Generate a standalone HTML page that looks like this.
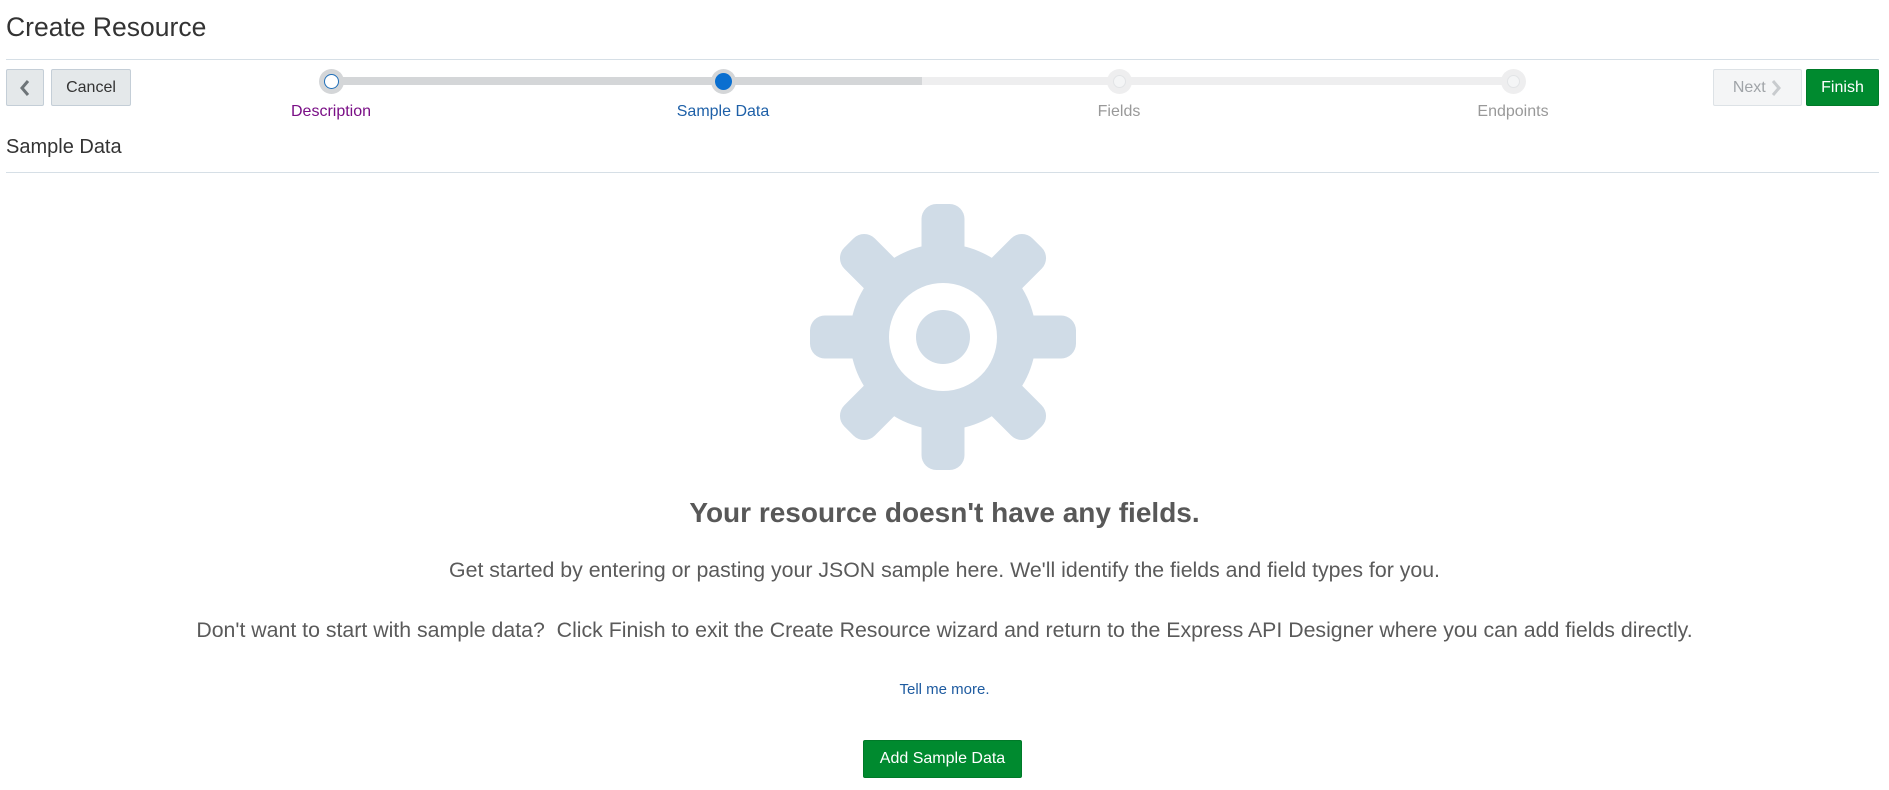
<!DOCTYPE html>
<html><head><meta charset="utf-8"><style>
*{box-sizing:border-box;margin:0;padding:0}
body{width:1889px;height:790px;background:#fff;font-family:"Liberation Sans",sans-serif;position:relative;overflow:hidden;color:#333}
.a{position:absolute}
.hr{position:absolute;left:6px;width:1873px;height:1px;background:#d6dfe6}
.btn{position:absolute;top:69px;height:37px;border:1px solid #c4ced7;border-radius:2px;background:#e4e8ea;font-size:16px;display:flex;align-items:center;justify-content:center;color:#333}
.c{position:absolute;top:69px;width:25px;height:25px;border-radius:50%}
.lbl{position:absolute;top:103px;font-size:16px;transform:translateX(-50%);white-space:nowrap}
.ctr{position:absolute;left:0;width:1889px;text-align:center;color:#5a5a5a;white-space:nowrap}
</style></head><body>
<div class="a" style="left:6px;top:12px;font-size:26.5px;color:#333">Create Resource</div>
<div class="hr" style="top:59px"></div>
<div class="btn" style="left:6px;width:38px"><svg width="14" height="20" viewBox="0 0 14 20"><path d="M10 3 L4 10 L10 17" fill="none" stroke="#6d7478" stroke-width="3"/></svg></div>
<div class="btn" style="left:51px;width:80px">Cancel</div>
<div class="a" style="left:331px;top:77px;width:591px;height:8px;background:#d4d6d8"></div>
<div class="a" style="left:922px;top:77px;width:591px;height:8px;background:#eeeeef"></div>
<div class="c" style="left:319px;background:#d4d6d8"><div class="a" style="left:5px;top:5px;width:15px;height:15px;border-radius:50%;background:#fff;border:1.5px solid #1f6fb9"></div></div>
<div class="c" style="left:711px;background:#d4d6d8"><div class="a" style="left:4px;top:4px;width:17px;height:17px;border-radius:50%;background:#0a6fd0"></div></div>
<div class="c" style="left:1107px;background:#eeeeef"><div class="a" style="left:6px;top:6px;width:13px;height:13px;border-radius:50%;background:#f4f5f6;border:1px solid #e2e4e6"></div></div>
<div class="c" style="left:1501px;background:#eeeeef"><div class="a" style="left:6px;top:6px;width:13px;height:13px;border-radius:50%;background:#f4f5f6;border:1px solid #e2e4e6"></div></div>
<div class="lbl" style="left:331px;color:#7a0f86">Description</div>
<div class="lbl" style="left:723px;color:#1e60a8">Sample Data</div>
<div class="lbl" style="left:1119px;color:#999">Fields</div>
<div class="lbl" style="left:1513px;color:#999">Endpoints</div>
<div class="btn" style="left:1713px;width:89px;background:#f4f5f6;border-color:#dde2e6;color:#a0a4a8">Next&nbsp;<svg width="12" height="18" viewBox="0 0 12 18"><path d="M3 2 L9 9 L3 16" fill="none" stroke="#c8cbce" stroke-width="3"/></svg></div>
<div class="btn" style="left:1806px;width:73px;background:#008a2f;border-color:#007a29;color:#fff">Finish</div>
<div class="a" style="left:6px;top:136px;font-size:20px;color:#333">Sample Data</div>
<div class="hr" style="top:172px"></div>
<svg class="a" style="left:809px;top:203px" width="268" height="268" viewBox="-134 -134 268 268">
<g fill="#d0dce7">
<g id="t"><rect x="-21.5" y="-133" width="43" height="70" rx="15"/></g>
<use href="#t" transform="rotate(45)"/><use href="#t" transform="rotate(90)"/><use href="#t" transform="rotate(135)"/><use href="#t" transform="rotate(180)"/><use href="#t" transform="rotate(225)"/><use href="#t" transform="rotate(270)"/><use href="#t" transform="rotate(315)"/>
<circle r="93"/></g>
<circle r="54" fill="#fff"/><circle r="27" fill="#d0dce7"/>
</svg>
<div class="ctr" style="top:497px;font-size:28px;font-weight:bold;color:#585858">Your resource doesn't have any fields.</div>
<div class="ctr" style="top:558px;font-size:21.3px">Get started by entering or pasting your JSON sample here. We'll identify the fields and field types for you.</div>
<div class="ctr" style="top:618px;font-size:21.3px">Don't want to start with sample data?&nbsp; Click Finish to exit the Create Resource wizard and return to the Express API Designer where you can add fields directly.</div>
<div class="ctr" style="top:681px;font-size:15px;color:#1e5ba0">Tell me more.</div>
<div class="a" style="left:863px;top:740px;width:159px;height:38px;background:#008a2f;border:1px solid #007a29;border-radius:2px;color:#fff;font-size:16px;display:flex;align-items:center;justify-content:center">Add Sample Data</div>
</body></html>
